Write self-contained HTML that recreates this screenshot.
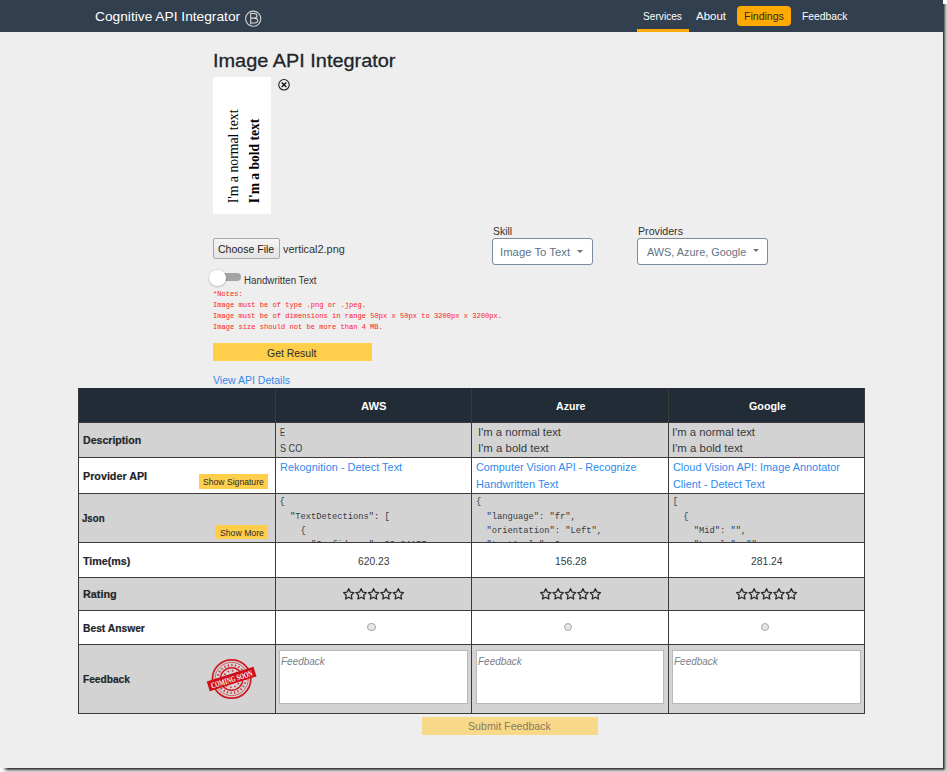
<!DOCTYPE html>
<html><head><meta charset="utf-8"><title>Cognitive API Integrator</title>
<style>
html,body{margin:0;padding:0;background:#fff;width:947px;height:772px;overflow:hidden;}
#shr{position:absolute;left:943px;top:4px;width:4px;height:768px;background:linear-gradient(to right,#3e3e3e 0,#3e3e3e 0.6px,#6e6e6e 1.4px,#a0a0a0 2.3px,#c9c9c9 3.2px,#cfcfcf 4px);}
#shb{position:absolute;left:3px;top:768px;width:940px;height:4px;background:linear-gradient(to bottom,#3e3e3e 0,#3e3e3e 0.6px,#6e6e6e 1.4px,#a0a0a0 2.3px,#c9c9c9 3.2px,#cfcfcf 4px);}
#shl{position:absolute;left:0;top:767.5px;width:9px;height:5px;background:linear-gradient(to right,#f6f6f6 0,#f6f6f6 2.5px,rgba(246,246,246,0) 8px);}
#shc{position:absolute;left:943px;top:768px;width:4px;height:4px;background:radial-gradient(circle at 0 0,#3e3e3e 0,#3e3e3e 0.6px,#6e6e6e 1.4px,#a0a0a0 2.3px,#c9c9c9 3.2px,#cfcfcf 4px);}
#page{position:absolute;left:0;top:0;width:943px;height:768px;background:#eeeeee;overflow:hidden;font-family:"Liberation Sans",sans-serif;}
</style></head><body>
<div id="shr"></div><div id="shb"></div><div id="shc"></div><div id="shl"></div>
<div id="page">
<div style='position:absolute;left:0.00px;top:0.00px;width:943.00px;height:31.50px;background:#323f4e'></div>
<div style='position:absolute;left:95.30px;top:17.45px;line-height:0;white-space:pre;font-family:"Liberation Sans",sans-serif;font-size:13px;font-weight:normal;font-style:normal;color:#ffffff;transform:scaleX(1.0570);transform-origin:0 0;'>Cognitive API Integrator</div>
<svg style='position:absolute;left:0;top:0' width='270' height='30' viewBox='0 0 270 30'><circle cx='253.2' cy='18.7' r='7.6' fill='none' stroke='#d6d6d6' stroke-width='1.05'/><path d='M250.7 24.6 V13.4 H253.9 C256 13.4 257 14.4 257 15.8 C257 17.2 255.9 18.1 253.9 18.1 H250.7 M253.9 18.1 C256.6 18.1 257.8 19.2 257.8 20.6 C257.8 22.1 256.6 22.9 254.3 22.9 H250.7' fill='none' stroke='#dcdcdc' stroke-width='1.05'/></svg>
<div style='position:absolute;left:642.90px;top:16.12px;line-height:0;white-space:pre;font-family:"Liberation Sans",sans-serif;font-size:11px;font-weight:normal;font-style:normal;color:#ffffff;transform:scaleX(0.9232);transform-origin:0 0;'>Services</div>
<div style='position:absolute;left:696.00px;top:16.12px;line-height:0;white-space:pre;font-family:"Liberation Sans",sans-serif;font-size:11px;font-weight:normal;font-style:normal;color:#ffffff;transform:scaleX(1.0457);transform-origin:0 0;'>About</div>
<div style='position:absolute;left:736.60px;top:5.50px;width:54.50px;height:20.70px;background:#ffaa00;border-radius:4px'></div>
<div style='position:absolute;left:743.90px;top:16.12px;line-height:0;white-space:pre;font-family:"Liberation Sans",sans-serif;font-size:11px;font-weight:normal;font-style:normal;color:#2a2a2a;transform:scaleX(0.9578);transform-origin:0 0;'>Findings</div>
<div style='position:absolute;left:801.90px;top:16.12px;line-height:0;white-space:pre;font-family:"Liberation Sans",sans-serif;font-size:11px;font-weight:normal;font-style:normal;color:#ffffff;transform:scaleX(0.9404);transform-origin:0 0;'>Feedback</div>
<div style='position:absolute;left:636.80px;top:29.20px;width:52.20px;height:2.40px;background:#ffaa00'></div>
<div style='position:absolute;left:212.84px;top:61.30px;line-height:0;white-space:pre;font-family:"Liberation Sans",sans-serif;font-size:18.8px;font-weight:normal;font-style:normal;color:#212529;transform:scaleX(1.0590);transform-origin:0 0;-webkit-text-stroke:0.3px currentColor;'>Image API Integrator</div>
<div style='position:absolute;left:212.80px;top:76.70px;width:58.50px;height:137.10px;background:#ffffff'></div>
<div style='position:absolute;left:237.60px;top:199.26px;line-height:0;white-space:pre;font-family:"Liberation Serif",serif;font-size:14px;font-weight:normal;font-style:normal;color:#000;transform:rotate(-90deg) scaleX(0.9828);transform-origin:0 4.34px;'>I'm a normal text</div>
<div style='position:absolute;left:259.20px;top:199.26px;line-height:0;white-space:pre;font-family:"Liberation Serif",serif;font-size:14px;font-weight:bold;font-style:normal;color:#000;transform:rotate(-90deg) scaleX(0.9677);transform-origin:0 4.34px;'>I'm a bold text</div>
<svg style='position:absolute;left:0;top:0' width='300' height='100' viewBox='0 0 300 100'><circle cx='284' cy='84.8' r='5.25' fill='none' stroke='#1e1e1e' stroke-width='1.1'/><path d='M281.7 82.5 L286.3 87.1 M286.3 82.5 L281.7 87.1' stroke='#111' stroke-width='1.35'/></svg>
<div style='position:absolute;left:212.60px;top:238.10px;width:67.10px;height:20.60px;background:linear-gradient(#f4f4f4,#e4e4e4);border:1px solid #a8a8a8;border-radius:2px;box-sizing:border-box'></div>
<div style='position:absolute;left:218.20px;top:249.12px;line-height:0;white-space:pre;font-family:"Liberation Sans",sans-serif;font-size:11px;font-weight:normal;font-style:normal;color:#222;transform:scaleX(0.9577);transform-origin:0 0;'>Choose File</div>
<div style='position:absolute;left:282.70px;top:249.12px;line-height:0;white-space:pre;font-family:"Liberation Sans",sans-serif;font-size:11px;font-weight:normal;font-style:normal;color:#333;transform:scaleX(0.9911);transform-origin:0 0;'>vertical2.png</div>
<div style='position:absolute;left:492.60px;top:230.68px;line-height:0;white-space:pre;font-family:"Liberation Sans",sans-serif;font-size:10.5px;font-weight:normal;font-style:normal;color:#333;transform:scaleX(0.9937);transform-origin:0 0;'>Skill</div>
<div style='position:absolute;left:492.20px;top:238.30px;width:100.80px;height:26.50px;background:#fff;border:1px solid #7d8a99;border-radius:3px;box-sizing:border-box'></div>
<div style='position:absolute;left:500.47px;top:251.72px;line-height:0;white-space:pre;font-family:"Liberation Sans",sans-serif;font-size:11px;font-weight:normal;font-style:normal;color:#627385;transform:scaleX(1.0294);transform-origin:0 0;'>Image To Text</div>
<div style='position:absolute;left:577px;top:249.5px;width:0;height:0;border-left:3.2px solid transparent;border-right:3.2px solid transparent;border-top:3.5px solid #627385'></div>
<div style='position:absolute;left:637.60px;top:230.68px;line-height:0;white-space:pre;font-family:"Liberation Sans",sans-serif;font-size:10.5px;font-weight:normal;font-style:normal;color:#333;transform:scaleX(1.0136);transform-origin:0 0;'>Providers</div>
<div style='position:absolute;left:637.10px;top:238.30px;width:130.90px;height:26.50px;background:#fff;border:1px solid #7d8a99;border-radius:3px;box-sizing:border-box'></div>
<div style='position:absolute;left:646.60px;top:252.01px;line-height:0;white-space:pre;font-family:"Liberation Sans",sans-serif;font-size:11px;font-weight:normal;font-style:normal;color:#627385;transform:scaleX(0.9885);transform-origin:0 0;'>AWS, Azure, Google</div>
<div style='position:absolute;left:752.8px;top:249.3px;width:0;height:0;border-left:3.2px solid transparent;border-right:3.2px solid transparent;border-top:3.5px solid #627385'></div>
<div style='position:absolute;left:217.00px;top:273.20px;width:23.50px;height:7.60px;background:#a3a3a3;border-radius:4px'></div>
<div style='position:absolute;left:209.3px;top:269.7px;width:16.8px;height:16.8px;border-radius:50%;background:#fff;box-shadow:0 0.5px 2px rgba(0,0,0,0.35)'></div>
<div style='position:absolute;left:243.90px;top:281.05px;line-height:0;white-space:pre;font-family:"Liberation Sans",sans-serif;font-size:10px;font-weight:normal;font-style:normal;color:#333;transform:scaleX(0.9759);transform-origin:0 0;'>Handwritten Text</div>
<div style='position:absolute;left:213.10px;top:293.76px;line-height:0;white-space:pre;font-family:"Liberation Mono",monospace;font-size:6.95px;font-weight:normal;font-style:normal;color:#ff1a1a;transform:scaleX(1.0200);transform-origin:0 0;'>*Notes:</div>
<div style='position:absolute;left:213.10px;top:304.86px;line-height:0;white-space:pre;font-family:"Liberation Mono",monospace;font-size:6.95px;font-weight:normal;font-style:normal;color:#ff1a1a;transform:scaleX(1.0200);transform-origin:0 0;'>Image must be of type .png or .jpeg.</div>
<div style='position:absolute;left:213.10px;top:315.86px;line-height:0;white-space:pre;font-family:"Liberation Mono",monospace;font-size:6.95px;font-weight:normal;font-style:normal;color:#ff1a1a;transform:scaleX(1.0205);transform-origin:0 0;'>Image must be of dimensions in range 50px x 50px to 3200px x 3200px.</div>
<div style='position:absolute;left:213.10px;top:326.86px;line-height:0;white-space:pre;font-family:"Liberation Mono",monospace;font-size:6.95px;font-weight:normal;font-style:normal;color:#ff1a1a;transform:scaleX(1.0200);transform-origin:0 0;'>Image size should not be more than 4 MB.</div>
<div style='position:absolute;left:212.60px;top:343.20px;width:159.10px;height:17.80px;background:#ffcf4c'></div>
<div style='position:absolute;left:267.30px;top:352.81px;line-height:0;white-space:pre;font-family:"Liberation Sans",sans-serif;font-size:11px;font-weight:normal;font-style:normal;color:#2b2b2b;transform:scaleX(0.9497);transform-origin:0 0;'>Get Result</div>
<div style='position:absolute;left:213.00px;top:380.31px;line-height:0;white-space:pre;font-family:"Liberation Sans",sans-serif;font-size:11px;font-weight:normal;font-style:normal;color:#2f8af0;transform:scaleX(0.9570);transform-origin:0 0;'>View API Details</div>
<div style='position:absolute;left:78.00px;top:388.00px;width:787.00px;height:35.00px;background:#222c36'></div>
<div style='position:absolute;left:78.00px;top:422.00px;width:787.00px;height:36.00px;background:#d3d3d3'></div>
<div style='position:absolute;left:78.00px;top:457.00px;width:787.00px;height:37.00px;background:#fff'></div>
<div style='position:absolute;left:78.00px;top:493.00px;width:787.00px;height:50.00px;background:#d3d3d3'></div>
<div style='position:absolute;left:78.00px;top:542.00px;width:787.00px;height:36.00px;background:#fff'></div>
<div style='position:absolute;left:78.00px;top:577.00px;width:787.00px;height:34.00px;background:#d3d3d3'></div>
<div style='position:absolute;left:78.00px;top:610.00px;width:787.00px;height:35.00px;background:#fff'></div>
<div style='position:absolute;left:78.00px;top:644.00px;width:787.00px;height:70.00px;background:#d3d3d3'></div>
<div style='position:absolute;left:78.00px;top:422.00px;width:787.00px;height:1.00px;background:#3a3a3a'></div>
<div style='position:absolute;left:78.00px;top:457.00px;width:787.00px;height:1.00px;background:#3a3a3a'></div>
<div style='position:absolute;left:78.00px;top:493.00px;width:787.00px;height:1.00px;background:#3a3a3a'></div>
<div style='position:absolute;left:78.00px;top:542.00px;width:787.00px;height:1.00px;background:#3a3a3a'></div>
<div style='position:absolute;left:78.00px;top:577.00px;width:787.00px;height:1.00px;background:#3a3a3a'></div>
<div style='position:absolute;left:78.00px;top:610.00px;width:787.00px;height:1.00px;background:#3a3a3a'></div>
<div style='position:absolute;left:78.00px;top:644.00px;width:787.00px;height:1.00px;background:#3a3a3a'></div>
<div style='position:absolute;left:78.00px;top:713.00px;width:787.00px;height:1.00px;background:#3a3a3a'></div>
<div style='position:absolute;left:78.00px;top:388.00px;width:1.00px;height:326.00px;background:#3a3a3a'></div>
<div style='position:absolute;left:275.00px;top:388.00px;width:1.00px;height:326.00px;background:#3a3a3a'></div>
<div style='position:absolute;left:471.00px;top:388.00px;width:1.00px;height:326.00px;background:#3a3a3a'></div>
<div style='position:absolute;left:668.00px;top:388.00px;width:1.00px;height:326.00px;background:#3a3a3a'></div>
<div style='position:absolute;left:864.00px;top:388.00px;width:1.00px;height:326.00px;background:#3a3a3a'></div>
<div style='position:absolute;left:78.00px;top:388.00px;width:787.00px;height:1.00px;background:#222c36'></div>
<div style='position:absolute;left:361.10px;top:405.92px;line-height:0;white-space:pre;font-family:"Liberation Sans",sans-serif;font-size:11px;font-weight:bold;font-style:normal;color:#fff;transform:scaleX(1.0194);transform-origin:0 0;'>AWS</div>
<div style='position:absolute;left:555.80px;top:405.71px;line-height:0;white-space:pre;font-family:"Liberation Sans",sans-serif;font-size:11px;font-weight:bold;font-style:normal;color:#fff;transform:scaleX(0.9624);transform-origin:0 0;'>Azure</div>
<div style='position:absolute;left:748.60px;top:405.71px;line-height:0;white-space:pre;font-family:"Liberation Sans",sans-serif;font-size:11px;font-weight:bold;font-style:normal;color:#fff;transform:scaleX(0.9743);transform-origin:0 0;'>Google</div>
<div style='position:absolute;left:83.00px;top:440.01px;line-height:0;white-space:pre;font-family:"Liberation Sans",sans-serif;font-size:11px;font-weight:bold;font-style:normal;color:#212529;transform:scaleX(0.9623);transform-origin:0 0;-webkit-text-stroke:0.2px currentColor;'>Description</div>
<div style='position:absolute;left:82.80px;top:475.62px;line-height:0;white-space:pre;font-family:"Liberation Sans",sans-serif;font-size:11px;font-weight:bold;font-style:normal;color:#212529;transform:scaleX(0.9763);transform-origin:0 0;-webkit-text-stroke:0.2px currentColor;'>Provider API</div>
<div style='position:absolute;left:82.30px;top:517.82px;line-height:0;white-space:pre;font-family:"Liberation Sans",sans-serif;font-size:11px;font-weight:bold;font-style:normal;color:#212529;transform:scaleX(0.8785);transform-origin:0 0;-webkit-text-stroke:0.2px currentColor;'>Json</div>
<div style='position:absolute;left:82.80px;top:561.02px;line-height:0;white-space:pre;font-family:"Liberation Sans",sans-serif;font-size:11px;font-weight:bold;font-style:normal;color:#212529;transform:scaleX(0.9727);transform-origin:0 0;-webkit-text-stroke:0.2px currentColor;'>Time(ms)</div>
<div style='position:absolute;left:82.80px;top:594.42px;line-height:0;white-space:pre;font-family:"Liberation Sans",sans-serif;font-size:11px;font-weight:bold;font-style:normal;color:#212529;transform:scaleX(0.9821);transform-origin:0 0;-webkit-text-stroke:0.2px currentColor;'>Rating</div>
<div style='position:absolute;left:82.80px;top:628.22px;line-height:0;white-space:pre;font-family:"Liberation Sans",sans-serif;font-size:11px;font-weight:bold;font-style:normal;color:#212529;transform:scaleX(0.9339);transform-origin:0 0;-webkit-text-stroke:0.2px currentColor;'>Best Answer</div>
<div style='position:absolute;left:82.80px;top:679.32px;line-height:0;white-space:pre;font-family:"Liberation Sans",sans-serif;font-size:11px;font-weight:bold;font-style:normal;color:#212529;transform:scaleX(0.9239);transform-origin:0 0;-webkit-text-stroke:0.2px currentColor;'>Feedback</div>
<div style='position:absolute;left:198.90px;top:474.40px;width:68.90px;height:14.40px;background:#ffcf4c'></div>
<div style='position:absolute;left:202.70px;top:482.19px;line-height:0;white-space:pre;font-family:"Liberation Sans",sans-serif;font-size:9px;font-weight:normal;font-style:normal;color:#2b2b2b;transform:scaleX(0.9570);transform-origin:0 0;'>Show Signature</div>
<div style='position:absolute;left:215.40px;top:524.70px;width:52.40px;height:14.30px;background:#ffcf4c'></div>
<div style='position:absolute;left:219.60px;top:532.88px;line-height:0;white-space:pre;font-family:"Liberation Sans",sans-serif;font-size:9px;font-weight:normal;font-style:normal;color:#2b2b2b;transform:scaleX(0.9646);transform-origin:0 0;'>Show More</div>
<div style='position:absolute;left:279.60px;top:432.12px;line-height:0;white-space:pre;font-family:"Liberation Sans",sans-serif;font-size:11px;font-weight:normal;font-style:normal;color:#343a40;transform:scaleX(0.6714);transform-origin:0 0;'>E</div>
<div style='position:absolute;left:279.60px;top:448.42px;line-height:0;white-space:pre;font-family:"Liberation Sans",sans-serif;font-size:11px;font-weight:normal;font-style:normal;color:#343a40;transform:scaleX(0.8267);transform-origin:0 0;'>S CO</div>
<div style='position:absolute;left:477.87px;top:432.12px;line-height:0;white-space:pre;font-family:"Liberation Sans",sans-serif;font-size:11px;font-weight:normal;font-style:normal;color:#343a40;transform:scaleX(1.0250);transform-origin:0 0;'>I'm a normal text</div>
<div style='position:absolute;left:477.86px;top:448.42px;line-height:0;white-space:pre;font-family:"Liberation Sans",sans-serif;font-size:11px;font-weight:normal;font-style:normal;color:#343a40;transform:scaleX(1.0391);transform-origin:0 0;'>I'm a bold text</div>
<div style='position:absolute;left:671.77px;top:432.12px;line-height:0;white-space:pre;font-family:"Liberation Sans",sans-serif;font-size:11px;font-weight:normal;font-style:normal;color:#343a40;transform:scaleX(1.0250);transform-origin:0 0;'>I'm a normal text</div>
<div style='position:absolute;left:671.76px;top:448.42px;line-height:0;white-space:pre;font-family:"Liberation Sans",sans-serif;font-size:11px;font-weight:normal;font-style:normal;color:#343a40;transform:scaleX(1.0391);transform-origin:0 0;'>I'm a bold text</div>
<div style='position:absolute;left:279.60px;top:467.12px;line-height:0;white-space:pre;font-family:"Liberation Sans",sans-serif;font-size:11px;font-weight:normal;font-style:normal;color:#2f8af0;transform:scaleX(0.9956);transform-origin:0 0;'>Rekognition - Detect Text</div>
<div style='position:absolute;left:475.90px;top:467.12px;line-height:0;white-space:pre;font-family:"Liberation Sans",sans-serif;font-size:11px;font-weight:normal;font-style:normal;color:#2f8af0;transform:scaleX(0.9839);transform-origin:0 0;'>Computer Vision API - Recognize</div>
<div style='position:absolute;left:475.90px;top:483.92px;line-height:0;white-space:pre;font-family:"Liberation Sans",sans-serif;font-size:11px;font-weight:normal;font-style:normal;color:#2f8af0;transform:scaleX(1.0065);transform-origin:0 0;'>Handwritten Text</div>
<div style='position:absolute;left:672.80px;top:467.12px;line-height:0;white-space:pre;font-family:"Liberation Sans",sans-serif;font-size:11px;font-weight:normal;font-style:normal;color:#2f8af0;transform:scaleX(0.9905);transform-origin:0 0;'>Cloud Vision API: Image Annotator</div>
<div style='position:absolute;left:672.80px;top:483.92px;line-height:0;white-space:pre;font-family:"Liberation Sans",sans-serif;font-size:11px;font-weight:normal;font-style:normal;color:#2f8af0;transform:scaleX(0.9907);transform-origin:0 0;'>Client - Detect Text</div>
<div style='position:absolute;left:279.6px;top:494px;width:195px;height:48px;overflow:hidden'>
<div style='position:absolute;left:0.00px;top:8.31px;line-height:0;white-space:pre;font-family:"Liberation Mono",monospace;font-size:8.75px;font-weight:normal;font-style:normal;color:#343a40;'>{</div>
<div style='position:absolute;left:0.00px;top:22.51px;line-height:0;white-space:pre;font-family:"Liberation Mono",monospace;font-size:8.75px;font-weight:normal;font-style:normal;color:#343a40;'>  "TextDetections": [</div>
<div style='position:absolute;left:0.00px;top:36.71px;line-height:0;white-space:pre;font-family:"Liberation Mono",monospace;font-size:8.75px;font-weight:normal;font-style:normal;color:#343a40;'>    {</div>
<div style='position:absolute;left:0.00px;top:50.91px;line-height:0;white-space:pre;font-family:"Liberation Mono",monospace;font-size:8.75px;font-weight:normal;font-style:normal;color:#343a40;'>      "Confidence": 99.84157,</div>
</div>
<div style='position:absolute;left:476px;top:494px;width:195px;height:48px;overflow:hidden'>
<div style='position:absolute;left:0.00px;top:8.31px;line-height:0;white-space:pre;font-family:"Liberation Mono",monospace;font-size:8.75px;font-weight:normal;font-style:normal;color:#343a40;'>{</div>
<div style='position:absolute;left:0.00px;top:22.51px;line-height:0;white-space:pre;font-family:"Liberation Mono",monospace;font-size:8.75px;font-weight:normal;font-style:normal;color:#343a40;'>  "language": "fr",</div>
<div style='position:absolute;left:0.00px;top:36.71px;line-height:0;white-space:pre;font-family:"Liberation Mono",monospace;font-size:8.75px;font-weight:normal;font-style:normal;color:#343a40;'>  "orientation": "Left",</div>
<div style='position:absolute;left:0.00px;top:50.91px;line-height:0;white-space:pre;font-family:"Liberation Mono",monospace;font-size:8.75px;font-weight:normal;font-style:normal;color:#343a40;'>  "textAngle": 0,</div>
</div>
<div style='position:absolute;left:672.8px;top:494px;width:195px;height:48px;overflow:hidden'>
<div style='position:absolute;left:0.00px;top:8.31px;line-height:0;white-space:pre;font-family:"Liberation Mono",monospace;font-size:8.75px;font-weight:normal;font-style:normal;color:#343a40;'>[</div>
<div style='position:absolute;left:0.00px;top:22.51px;line-height:0;white-space:pre;font-family:"Liberation Mono",monospace;font-size:8.75px;font-weight:normal;font-style:normal;color:#343a40;'>  {</div>
<div style='position:absolute;left:0.00px;top:36.71px;line-height:0;white-space:pre;font-family:"Liberation Mono",monospace;font-size:8.75px;font-weight:normal;font-style:normal;color:#343a40;'>    "Mid": "",</div>
<div style='position:absolute;left:0.00px;top:50.91px;line-height:0;white-space:pre;font-family:"Liberation Mono",monospace;font-size:8.75px;font-weight:normal;font-style:normal;color:#343a40;'>    "Locale": "",</div>
</div>
<div style='position:absolute;left:357.70px;top:560.82px;line-height:0;white-space:pre;font-family:"Liberation Sans",sans-serif;font-size:11px;font-weight:normal;font-style:normal;color:#343a40;transform:scaleX(0.9366);transform-origin:0 0;'>620.23</div>
<div style='position:absolute;left:554.50px;top:560.82px;line-height:0;white-space:pre;font-family:"Liberation Sans",sans-serif;font-size:11px;font-weight:normal;font-style:normal;color:#343a40;transform:scaleX(0.9395);transform-origin:0 0;'>156.28</div>
<div style='position:absolute;left:750.90px;top:560.82px;line-height:0;white-space:pre;font-family:"Liberation Sans",sans-serif;font-size:11px;font-weight:normal;font-style:normal;color:#343a40;transform:scaleX(0.9395);transform-origin:0 0;'>281.24</div>
<svg style='position:absolute;left:342.7px;top:588px' width='64' height='14' viewBox='0 0 64 14'><polygon transform='translate(0.0,0)' points='5.75,0.65 7.34,4.07 10.89,4.62 8.32,7.29 8.93,11.05 5.75,9.28 2.57,11.05 3.18,7.29 0.61,4.62 4.16,4.07' fill='none' stroke='#2a2a2a' stroke-width='1.3' stroke-linejoin='round'/><polygon transform='translate(12.4,0)' points='5.75,0.65 7.34,4.07 10.89,4.62 8.32,7.29 8.93,11.05 5.75,9.28 2.57,11.05 3.18,7.29 0.61,4.62 4.16,4.07' fill='none' stroke='#2a2a2a' stroke-width='1.3' stroke-linejoin='round'/><polygon transform='translate(24.8,0)' points='5.75,0.65 7.34,4.07 10.89,4.62 8.32,7.29 8.93,11.05 5.75,9.28 2.57,11.05 3.18,7.29 0.61,4.62 4.16,4.07' fill='none' stroke='#2a2a2a' stroke-width='1.3' stroke-linejoin='round'/><polygon transform='translate(37.2,0)' points='5.75,0.65 7.34,4.07 10.89,4.62 8.32,7.29 8.93,11.05 5.75,9.28 2.57,11.05 3.18,7.29 0.61,4.62 4.16,4.07' fill='none' stroke='#2a2a2a' stroke-width='1.3' stroke-linejoin='round'/><polygon transform='translate(49.6,0)' points='5.75,0.65 7.34,4.07 10.89,4.62 8.32,7.29 8.93,11.05 5.75,9.28 2.57,11.05 3.18,7.29 0.61,4.62 4.16,4.07' fill='none' stroke='#2a2a2a' stroke-width='1.3' stroke-linejoin='round'/></svg>
<svg style='position:absolute;left:539.5px;top:588px' width='64' height='14' viewBox='0 0 64 14'><polygon transform='translate(0.0,0)' points='5.75,0.65 7.34,4.07 10.89,4.62 8.32,7.29 8.93,11.05 5.75,9.28 2.57,11.05 3.18,7.29 0.61,4.62 4.16,4.07' fill='none' stroke='#2a2a2a' stroke-width='1.3' stroke-linejoin='round'/><polygon transform='translate(12.4,0)' points='5.75,0.65 7.34,4.07 10.89,4.62 8.32,7.29 8.93,11.05 5.75,9.28 2.57,11.05 3.18,7.29 0.61,4.62 4.16,4.07' fill='none' stroke='#2a2a2a' stroke-width='1.3' stroke-linejoin='round'/><polygon transform='translate(24.8,0)' points='5.75,0.65 7.34,4.07 10.89,4.62 8.32,7.29 8.93,11.05 5.75,9.28 2.57,11.05 3.18,7.29 0.61,4.62 4.16,4.07' fill='none' stroke='#2a2a2a' stroke-width='1.3' stroke-linejoin='round'/><polygon transform='translate(37.2,0)' points='5.75,0.65 7.34,4.07 10.89,4.62 8.32,7.29 8.93,11.05 5.75,9.28 2.57,11.05 3.18,7.29 0.61,4.62 4.16,4.07' fill='none' stroke='#2a2a2a' stroke-width='1.3' stroke-linejoin='round'/><polygon transform='translate(49.6,0)' points='5.75,0.65 7.34,4.07 10.89,4.62 8.32,7.29 8.93,11.05 5.75,9.28 2.57,11.05 3.18,7.29 0.61,4.62 4.16,4.07' fill='none' stroke='#2a2a2a' stroke-width='1.3' stroke-linejoin='round'/></svg>
<svg style='position:absolute;left:735.9px;top:588px' width='64' height='14' viewBox='0 0 64 14'><polygon transform='translate(0.0,0)' points='5.75,0.65 7.34,4.07 10.89,4.62 8.32,7.29 8.93,11.05 5.75,9.28 2.57,11.05 3.18,7.29 0.61,4.62 4.16,4.07' fill='none' stroke='#2a2a2a' stroke-width='1.3' stroke-linejoin='round'/><polygon transform='translate(12.4,0)' points='5.75,0.65 7.34,4.07 10.89,4.62 8.32,7.29 8.93,11.05 5.75,9.28 2.57,11.05 3.18,7.29 0.61,4.62 4.16,4.07' fill='none' stroke='#2a2a2a' stroke-width='1.3' stroke-linejoin='round'/><polygon transform='translate(24.8,0)' points='5.75,0.65 7.34,4.07 10.89,4.62 8.32,7.29 8.93,11.05 5.75,9.28 2.57,11.05 3.18,7.29 0.61,4.62 4.16,4.07' fill='none' stroke='#2a2a2a' stroke-width='1.3' stroke-linejoin='round'/><polygon transform='translate(37.2,0)' points='5.75,0.65 7.34,4.07 10.89,4.62 8.32,7.29 8.93,11.05 5.75,9.28 2.57,11.05 3.18,7.29 0.61,4.62 4.16,4.07' fill='none' stroke='#2a2a2a' stroke-width='1.3' stroke-linejoin='round'/><polygon transform='translate(49.6,0)' points='5.75,0.65 7.34,4.07 10.89,4.62 8.32,7.29 8.93,11.05 5.75,9.28 2.57,11.05 3.18,7.29 0.61,4.62 4.16,4.07' fill='none' stroke='#2a2a2a' stroke-width='1.3' stroke-linejoin='round'/></svg>
<div style='position:absolute;left:367.2px;top:622.6px;width:8.6px;height:8.6px;border-radius:50%;box-sizing:border-box;border:1px solid #a9a9a9;background:#e6e6e6'></div>
<div style='position:absolute;left:563.7px;top:622.6px;width:8.6px;height:8.6px;border-radius:50%;box-sizing:border-box;border:1px solid #a9a9a9;background:#e6e6e6'></div>
<div style='position:absolute;left:760.5px;top:622.6px;width:8.6px;height:8.6px;border-radius:50%;box-sizing:border-box;border:1px solid #a9a9a9;background:#e6e6e6'></div>
<div style='position:absolute;left:278.90px;top:650.00px;width:189.10px;height:53.80px;background:#fff;border:1px solid #b9b9b9;box-sizing:border-box'></div>
<div style='position:absolute;left:281.10px;top:660.72px;line-height:0;white-space:pre;font-family:"Liberation Sans",sans-serif;font-size:11px;font-weight:normal;font-style:italic;color:#7b8188;transform:scaleX(0.9076);transform-origin:0 0;'>Feedback</div>
<div style='position:absolute;left:475.50px;top:650.00px;width:188.90px;height:53.80px;background:#fff;border:1px solid #b9b9b9;box-sizing:border-box'></div>
<div style='position:absolute;left:477.70px;top:660.72px;line-height:0;white-space:pre;font-family:"Liberation Sans",sans-serif;font-size:11px;font-weight:normal;font-style:italic;color:#7b8188;transform:scaleX(0.9076);transform-origin:0 0;'>Feedback</div>
<div style='position:absolute;left:672.20px;top:650.00px;width:188.50px;height:53.80px;background:#fff;border:1px solid #b9b9b9;box-sizing:border-box'></div>
<div style='position:absolute;left:674.40px;top:660.72px;line-height:0;white-space:pre;font-family:"Liberation Sans",sans-serif;font-size:11px;font-weight:normal;font-style:italic;color:#7b8188;transform:scaleX(0.9076);transform-origin:0 0;'>Feedback</div>
<div style='position:absolute;left:422.00px;top:717.00px;width:176.00px;height:17.60px;background:#f8d98a'></div>
<div style='position:absolute;left:468.10px;top:726.22px;line-height:0;white-space:pre;font-family:"Liberation Sans",sans-serif;font-size:11px;font-weight:normal;font-style:normal;color:#8a7a5c;transform:scaleX(0.9687);transform-origin:0 0;'>Submit Feedback</div>
<svg style='position:absolute;left:206px;top:653px' width='52' height='52' viewBox='0 0 52 52'><g transform='translate(25.6,26)'><circle r='19.2' fill='none' stroke='#d11a22' stroke-width='1.7'/><circle r='16.6' fill='none' stroke='#d11a22' stroke-width='0.6'/><circle r='11.2' fill='none' stroke='#d11a22' stroke-width='1.4'/><circle r='13.9' fill='none' stroke='#d11a22' stroke-width='2.2' stroke-dasharray='1.2 2.4' opacity='0.9'/><circle r='8.2' fill='none' stroke='#d11a22' stroke-width='1.6' stroke-dasharray='1.3 3' /><g transform='rotate(-17.5)'><rect x='-24.5' y='-5' width='49' height='10' fill='#cf0e18'/><text x='0' y='3.2' text-anchor='middle' font-family='Liberation Serif' font-weight='bold' font-size='8.2' fill='#fff' textLength='43' lengthAdjust='spacingAndGlyphs'>COMING SOON</text></g></g></svg>
</div></body></html>
